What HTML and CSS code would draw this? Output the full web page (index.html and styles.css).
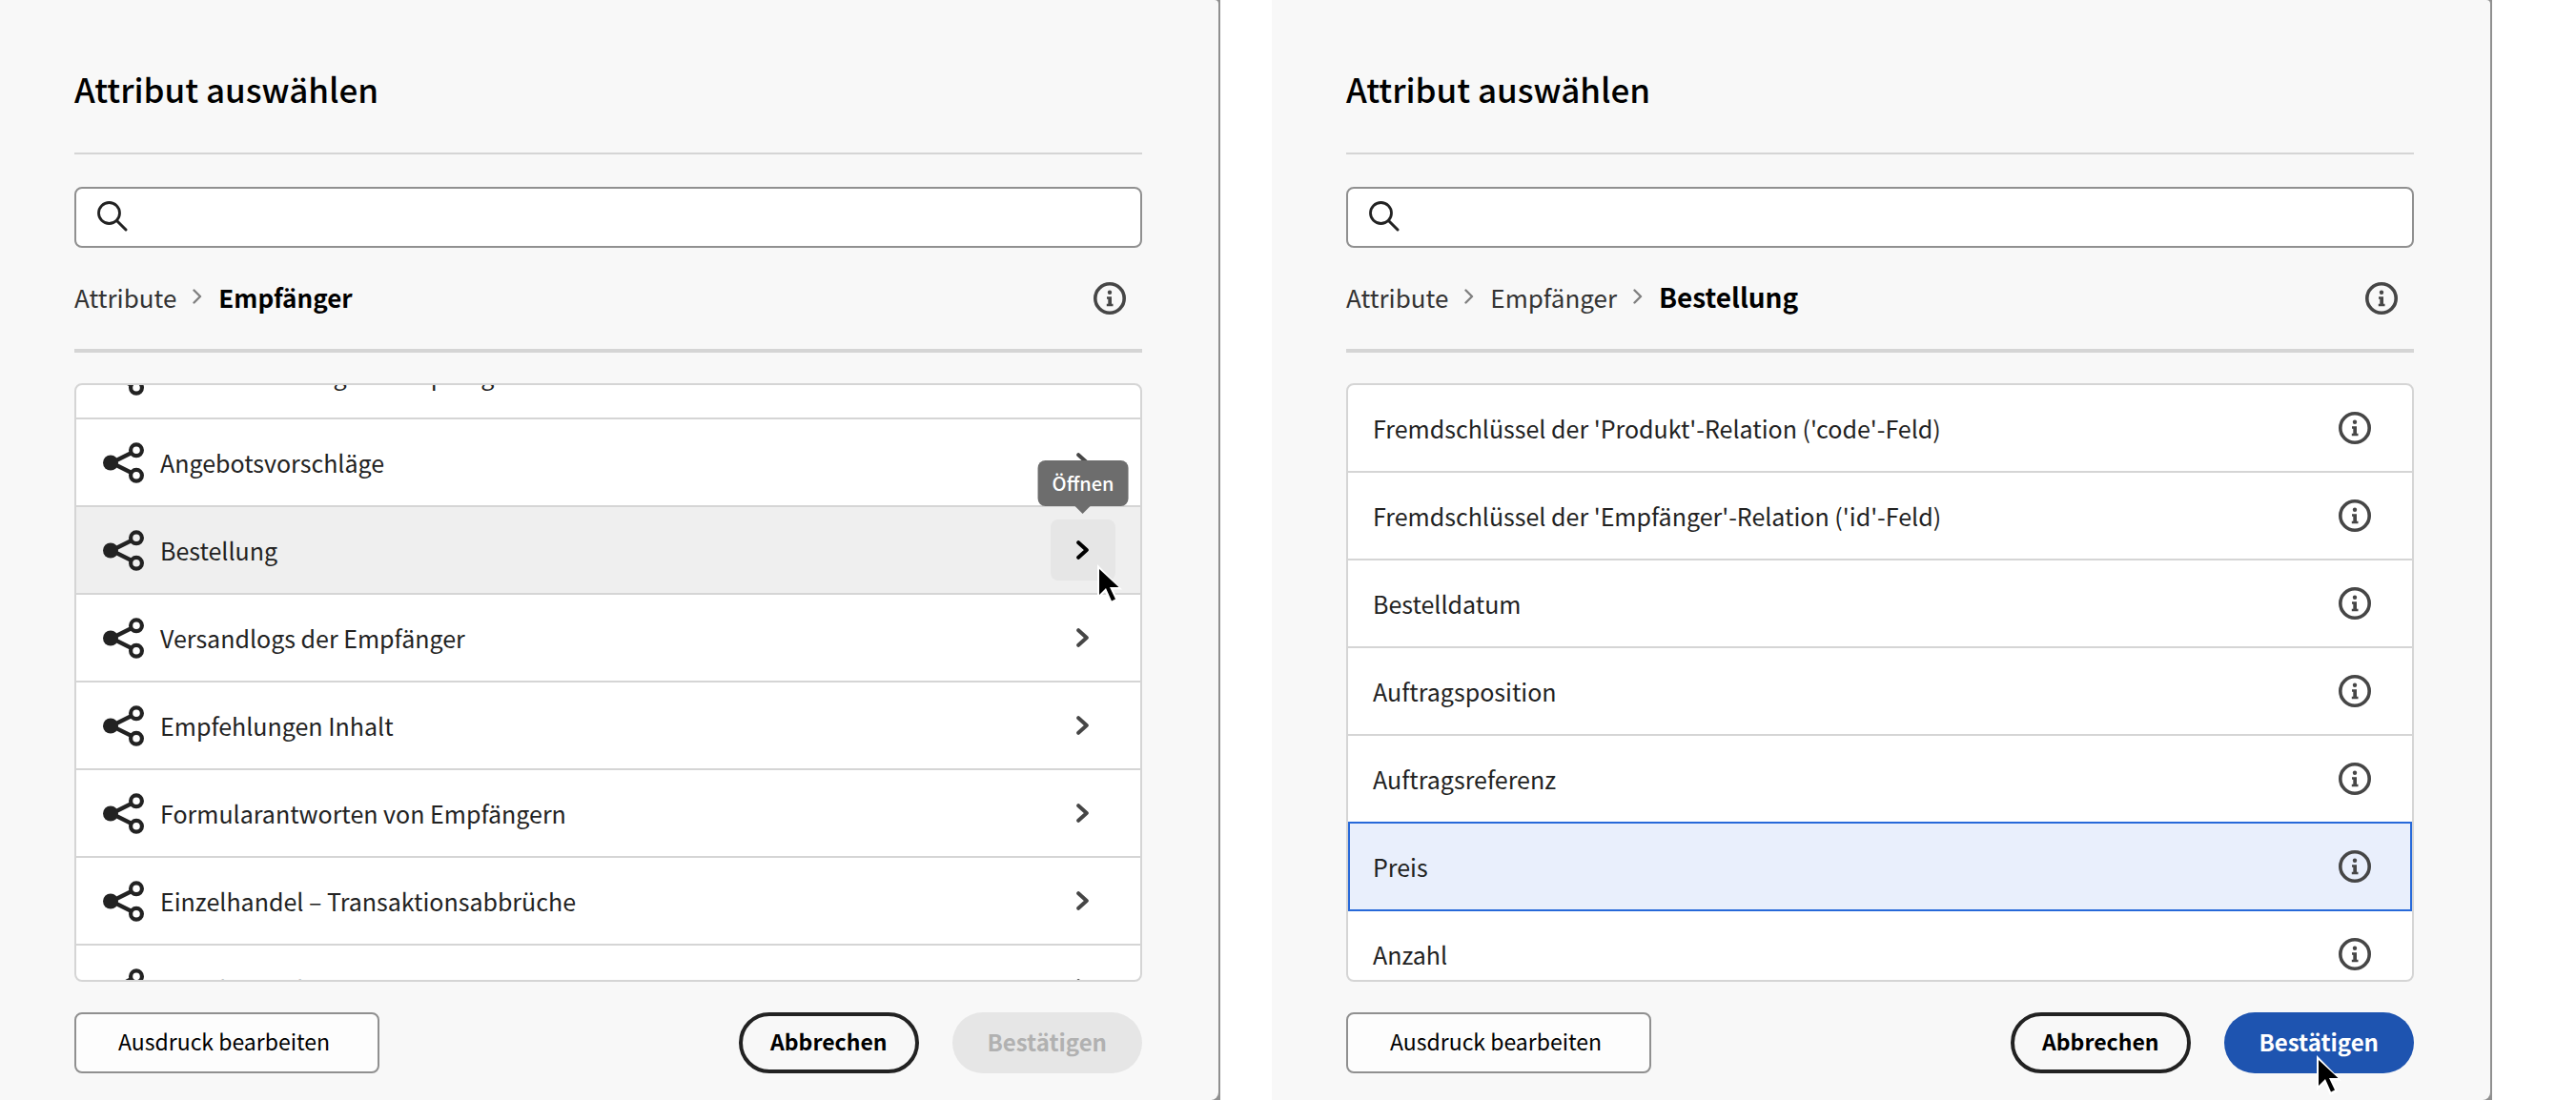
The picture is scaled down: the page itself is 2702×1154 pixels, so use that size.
FILE: index.html
```html
<!DOCTYPE html>
<html lang="de">
<head>
<meta charset="utf-8">
<meta name="viewport" content="width=device-width, initial-scale=1">
<title>Attribut auswählen</title>
<link rel="stylesheet" href="styles.css">
</head>
<body>
<svg class="sprite" aria-hidden="true">
  <symbol id="i-search" viewBox="0 0 32 32"><circle cx="12.5" cy="12.5" r="11" fill="none" stroke="currentColor" stroke-width="2.8"/><path d="M20.5 20.5 30 30" fill="none" stroke="currentColor" stroke-width="3" stroke-linecap="round"/></symbol>
  <symbol id="i-info" viewBox="0 0 34 34"><circle cx="17" cy="17" r="15.2" fill="none" stroke="currentColor" stroke-width="3.6"/><circle cx="17" cy="10.8" r="2.2"/><path d="M14 15.2h5v7.6h1.5v2.4h-6.7v-2.4h1.5v-5.1H14z"/></symbol>
  <symbol id="i-share" viewBox="0 -1 44 44"><path d="M9 21.5 30 11M9 21.5 30 32" fill="none" stroke="currentColor" stroke-width="4.2"/><circle cx="8" cy="21.5" r="8"/><circle cx="35" cy="8.3" r="5.9" fill="none" stroke="currentColor" stroke-width="4.2"/><circle cx="35" cy="34.8" r="5.9" fill="none" stroke="currentColor" stroke-width="4.2"/></symbol>
  <symbol id="i-next" viewBox="0 0 14 20"><path d="M2.2 2.2 10.8 10 2.2 17.8" fill="none" stroke="currentColor" stroke-width="4" stroke-linecap="round" stroke-linejoin="round"/></symbol>
  <symbol id="i-sep" viewBox="0 0 10 16"><path d="M1.5 1.5 8 8 1.5 14.5" fill="none" stroke="currentColor" stroke-width="2.4" stroke-linecap="round" stroke-linejoin="round"/></symbol>
  <symbol id="i-cursor" viewBox="0 0 28 44"><path d="M1 1v37l8-8 6 13 8-3.500-5.500-12H27z" fill="#fff"/><path d="M3 6v27l7-7 6 13.500 4-2L14 25h9.500z" fill="#000"/></symbol>
</svg>
<main class="screens">
  <div class="frame">
  <section class="panel" aria-labelledby="t1">
    <h1 class="title" id="t1">Attribut auswählen</h1>
    <div class="search"><svg class="search-icon"><use href="#i-search"/></svg><input class="search-input" type="search" aria-label="Attribute suchen"></div>
    <div class="trail">
      <nav class="crumbs" aria-label="Pfad">
        <a class="crumb" href="#">Attribute</a><svg class="sep"><use href="#i-sep"/></svg><strong class="here">Empfänger</strong>
      </nav>
      <button class="info" type="button" aria-label="Info"><svg><use href="#i-info"/></svg></button>
    </div>
    <div class="list">
      <ul class="rows scrolled">
        <li class="row"><svg class="share"><use href="#i-share"/></svg><span class="name">Datenzuordnung der Empfänger</span><button class="open" type="button" aria-label="Öffnen"><svg><use href="#i-next"/></svg></button></li>
        <li class="row"><svg class="share"><use href="#i-share"/></svg><span class="name">Angebotsvorschläge</span><button class="open" type="button" aria-label="Öffnen"><svg><use href="#i-next"/></svg></button></li>
        <li class="row hovered"><svg class="share"><use href="#i-share"/></svg><span class="name">Bestellung</span><button class="open active" type="button" aria-label="Öffnen"><svg><use href="#i-next"/></svg><span class="tip" role="tooltip">Öffnen</span><svg class="cursor"><use href="#i-cursor"/></svg></button></li>
        <li class="row"><svg class="share"><use href="#i-share"/></svg><span class="name">Versandlogs der Empfänger</span><button class="open" type="button" aria-label="Öffnen"><svg><use href="#i-next"/></svg></button></li>
        <li class="row"><svg class="share"><use href="#i-share"/></svg><span class="name">Empfehlungen Inhalt</span><button class="open" type="button" aria-label="Öffnen"><svg><use href="#i-next"/></svg></button></li>
        <li class="row"><svg class="share"><use href="#i-share"/></svg><span class="name">Formularantworten von Empfängern</span><button class="open" type="button" aria-label="Öffnen"><svg><use href="#i-next"/></svg></button></li>
        <li class="row"><svg class="share"><use href="#i-share"/></svg><span class="name">Einzelhandel – Transaktionsabbrüche</span><button class="open" type="button" aria-label="Öffnen"><svg><use href="#i-next"/></svg></button></li>
        <li class="row"><svg class="share"><use href="#i-share"/></svg><span class="name">Einzelhandel</span><button class="open" type="button" aria-label="Öffnen"><svg><use href="#i-next"/></svg></button></li>
      </ul>
    </div>
    <footer class="actions">
      <button class="edit" type="button">Ausdruck bearbeiten</button>
      <button class="pill cancel" type="button">Abbrechen</button>
      <button class="pill confirm" type="button" disabled>Bestätigen</button>
    </footer>
  </section>
  </div>
  <div class="frame">
  <section class="panel" aria-labelledby="t2">
    <h1 class="title" id="t2">Attribut auswählen</h1>
    <div class="search"><svg class="search-icon"><use href="#i-search"/></svg><input class="search-input" type="search" aria-label="Attribute suchen"></div>
    <div class="trail">
      <nav class="crumbs" aria-label="Pfad">
        <a class="crumb" href="#">Attribute</a><svg class="sep"><use href="#i-sep"/></svg><a class="crumb" href="#">Empfänger</a><svg class="sep"><use href="#i-sep"/></svg><strong class="here large">Bestellung</strong>
      </nav>
      <button class="info" type="button" aria-label="Info"><svg><use href="#i-info"/></svg></button>
    </div>
    <div class="list">
      <ul class="rows fields">
        <li class="row"><span class="name">Fremdschlüssel der 'Produkt'-Relation ('code'-Feld)</span><button class="info" type="button" aria-label="Info"><svg><use href="#i-info"/></svg></button></li>
        <li class="row"><span class="name">Fremdschlüssel der 'Empfänger'-Relation ('id'-Feld)</span><button class="info" type="button" aria-label="Info"><svg><use href="#i-info"/></svg></button></li>
        <li class="row"><span class="name">Bestelldatum</span><button class="info" type="button" aria-label="Info"><svg><use href="#i-info"/></svg></button></li>
        <li class="row"><span class="name">Auftragsposition</span><button class="info" type="button" aria-label="Info"><svg><use href="#i-info"/></svg></button></li>
        <li class="row"><span class="name">Auftragsreferenz</span><button class="info" type="button" aria-label="Info"><svg><use href="#i-info"/></svg></button></li>
        <li class="row selected"><span class="name">Preis</span><button class="info" type="button" aria-label="Info"><svg><use href="#i-info"/></svg></button></li>
        <li class="row"><span class="name">Anzahl</span><button class="info" type="button" aria-label="Info"><svg><use href="#i-info"/></svg></button></li>
      </ul>
    </div>
    <footer class="actions">
      <button class="edit" type="button">Ausdruck bearbeiten</button>
      <button class="pill cancel" type="button">Abbrechen</button>
      <button class="pill confirm" type="button">Bestätigen<svg class="cursor"><use href="#i-cursor"/></svg></button>
    </footer>
  </section>
  </div>
</main>
</body>
</html>
```
FILE: styles.css
```css
* { box-sizing: border-box; }

body {
  margin: 0;
  background: #fff;
  color: #222;
  font-family: "Noto Sans CJK SC", "Noto Sans", sans-serif;
  font-size: 25px;
}

button, input { font: inherit; color: inherit; }
button { padding: 0; border: 0; background: none; }
svg { display: block; fill: currentColor; }
.sprite { position: absolute; width: 0; height: 0; }

.screens {
  display: grid;
  grid-template-columns: 1fr 1fr;
  gap: 54px;
  padding-right: 88px;
  min-height: 100vh;
  background: #fff;
}

.frame {
  padding-right: 2px;
  background: #909090;
}

.panel {
  display: flex;
  flex-direction: column;
  height: 100vh;
  min-height: 600px;
  padding: 61px 80px 28px 78px;
  border-radius: 0 4px 8px 0;
  background: #f8f8f8;
}

.title {
  margin: 0;
  padding-bottom: 35px;
  border-bottom: 2px solid #d5d5d5;
  color: #000;
  font-size: 35px;
  font-weight: 500;
  line-height: 64px;
}

.search {
  display: flex;
  align-items: center;
  gap: 16px;
  height: 64px;
  margin-top: 34px;
  padding: 0 22px 2px;
  flex: none;
  border: 2px solid #909090;
  border-radius: 8px;
  background: #fff;
}
.search-icon { width: 32px; height: 32px; }
.search-input {
  flex: 1;
  border: 0;
  outline: 0;
  background: none;
}

.trail {
  display: flex;
  align-items: center;
  justify-content: space-between;
  height: 110px;
  padding-right: 17px;
  flex: none;
  border-bottom: 4px solid #d5d5d5;
}
.crumbs {
  display: flex;
  align-items: center;
  padding-bottom: 4px;
  font-size: 26px;
}
.crumb { color: #333; text-decoration: none; }
.sep { width: 10px; height: 16px; margin: 0 17px; color: #808080; }
.here { color: #000; font-weight: 700; }
.large { font-size: 28px; }
.info, .info svg { width: 34px; height: 34px; color: #464646; }

.list {
  flex: 1;
  min-height: 0;
  margin-top: 32px;
  overflow: hidden;
  border: 2px solid #d5d5d5;
  border-radius: 8px;
  background: #fff;
}
.rows { margin: 0; padding: 0; list-style: none; }
.scrolled { margin-top: -56px; }
.row {
  display: flex;
  align-items: center;
  gap: 16px;
  height: 92px;
  padding: 0 26px 0 28px;
  border-bottom: 2px solid #d5d5d5;
}
.name { flex: 1; }
.share { width: 44px; height: 44px; }
.hovered { background: #efefef; }
.open {
  position: relative;
  display: grid;
  place-items: center;
  width: 68px;
  height: 64px;
  border-radius: 8px;
  color: #464646;
}
.open > svg { width: 14px; height: 20px; }
.open.active { background: #e6e6e6; color: #000; }

.tip {
  position: absolute;
  bottom: 78px;
  left: 50%;
  padding: 0 15px;
  border-radius: 8px;
  background: #6d6d6d;
  color: #fff;
  font-size: 20px;
  font-weight: 500;
  line-height: 48px;
  transform: translateX(-50%);
}
.tip::after {
  position: absolute;
  top: 100%;
  left: 50%;
  margin-left: -8px;
  border: 8px solid transparent;
  border-bottom: 0;
  border-top-color: #6d6d6d;
  content: "";
}

.cursor { position: absolute; width: 28px; height: 44px; }
.open > .cursor { top: 46px; left: 48px; width: 28px; height: 44px; }
.pill > .cursor { top: 44px; left: 96px; }

.fields .row { padding: 0 43px 0 26px; }
.fields .selected {
  height: 94px;
  margin-top: -2px;
  padding: 0 41px 0 24px;
  border: 2px solid #2769d9;
  background: #e9effc;
}

.actions {
  display: flex;
  align-items: center;
  margin-top: 32px;
  flex: none;
}
.edit {
  width: 320px;
  height: 64px;
  margin-right: auto;
  padding: 0 6px 4px 0;
  border: 2px solid #909090;
  border-radius: 8px;
  background: #fdfdfd;
  color: #000;
  font-size: 23px;
}
.pill {
  position: relative;
  height: 64px;
  padding: 0 37px 4px;
  border-radius: 32px;
  font-size: 24px;
  font-weight: 700;
}
.cancel {
  padding: 0 29px 4px;
  border: 4px solid #222;
  color: #000;
  font-size: 23px;
}
.confirm { margin-left: 35px; background: #1e54b0; color: #fff; }
.confirm:disabled { background: #e6e6e6; color: #b1b1b1; }
```
